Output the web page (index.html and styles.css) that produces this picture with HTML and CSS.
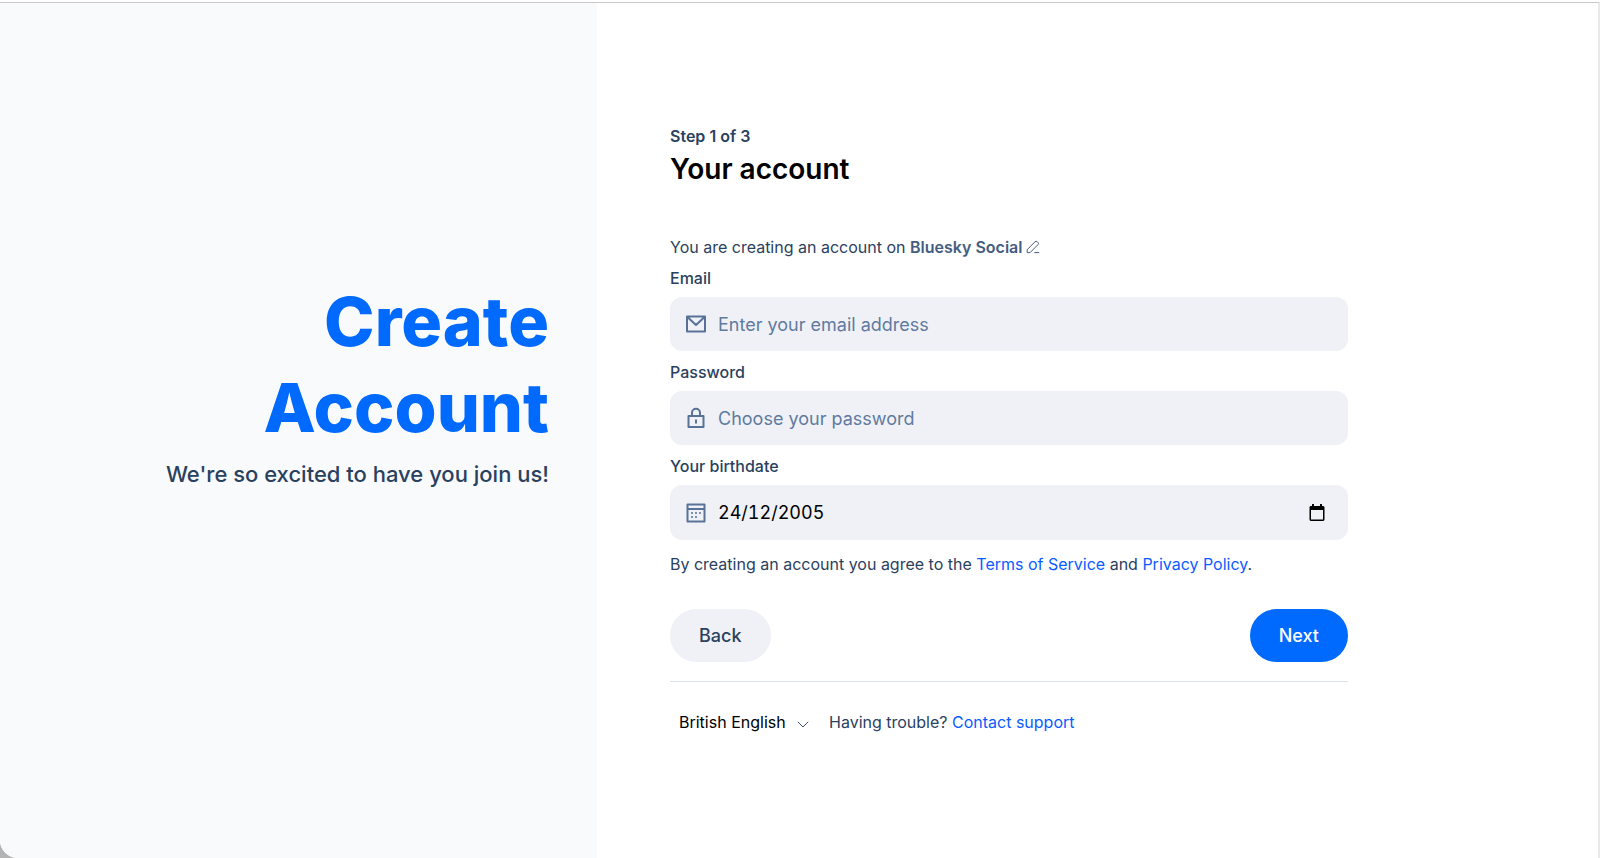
FILE: index.html
```
<!DOCTYPE html>
<html lang="en-GB">
<head>
<meta charset="utf-8">
<meta name="viewport" content="width=device-width, initial-scale=1">
<title>Create Account</title>
<link rel="stylesheet" href="styles.css">
</head>
<body>
<div class="page">
  <aside class="intro">
    <h1 class="intro-title">Create<br>Account</h1>
    <p class="intro-text">We're so excited to have you join us!</p>
  </aside>
  <main class="content">
    <form class="form">
      <p class="step">Step 1 of 3</p>
      <h2 class="title">Your account</h2>
      <p class="host">You are creating an account on
        <button type="button" class="host-button">Bluesky Social
          <svg class="pencil" viewBox="0 0 14 14" aria-hidden="true"><path d="M1.2 12.6v-3L9 1.8a1.6 1.6 0 0 1 2.3 0l.6.6a1.6 1.6 0 0 1 0 2.3l-7.800 7.900zM8.400 12.600h4.800"/></svg></button></p>

      <div class="field">
        <label for="email">Email</label>
        <div class="box">
          <svg class="icon" viewBox="0 0 24 24" aria-hidden="true"><path d="M3 4.500h18v15H3zM3.400 5L12 13l8.600-8"/></svg>
          <input id="email" type="email" placeholder="Enter your email address">
        </div>
      </div>
      <div class="field">
        <label for="password">Password</label>
        <div class="box">
          <svg class="icon" viewBox="0 0 24 24" aria-hidden="true"><path d="M4.500 10h15v11h-15zM8 10V6.700a4 4 0 0 1 8 0V10M12 13.500v4"/></svg>
          <input id="password" type="password" placeholder="Choose your password">
        </div>
      </div>
      <div class="field">
        <label for="birthdate">Your birthdate</label>
        <div class="box box-date">
          <svg class="icon" viewBox="0 0 24 24" aria-hidden="true"><path d="M3.500 3.500h17v17h-17zM3.500 8h17"/><path class="dots" d="M8 12h.01M12 12h.01M16 12h.01M8 16h.01M12 16h.01"/></svg>
          <input id="birthdate" class="date" type="text" inputmode="numeric" value="24/12/2005">
          <button type="button" class="picker" aria-label="Open calendar">
            <svg viewBox="0 0 16 18" aria-hidden="true"><path d="M3 0h2v2h6V0h2v2h1.200A1.400 1.400 0 0 1 15.500 3.400V15.600A1.400 1.400 0 0 1 14.100 17H1.900A1.400 1.400 0 0 1 .5 15.600V3.400A1.400 1.400 0 0 1 1.900 2H3zM2 6v9.500h12V6z"/></svg>
          </button>
        </div>
      </div>

      <p class="terms">By creating an account you agree to the <a href="#terms">Terms of Service</a> and <a href="#privacy">Privacy Policy</a>.</p>
      <div class="actions">
        <button type="button" class="button">Back</button>
        <button type="submit" class="button button-primary">Next</button>
      </div>
      <div class="footer">
        <div class="language">
          <select aria-label="Language"><option>British English</option></select>
          <svg class="chevron" viewBox="0 0 12 7" aria-hidden="true"><path d="M.8.8L6 6 11.200.8"/></svg>
        </div>
        <p>Having trouble? <a href="#support">Contact support</a></p>
      </div>
    </form>
  </main>
</div>
</body>
</html>
```
FILE: styles.css
```
* { box-sizing: border-box; }
body {
  display: flex;
  flex-direction: column;
  min-height: 100vh;
  margin: 0;
  border-top: 2px solid #fff;
  background: #b4b4b4;
  color: #2a415e;
  font: 16px/24px Inter, sans-serif;
}
h1, h2, p { margin: 0; }
button, input, select { font: inherit; color: inherit; border: 0; margin: 0; padding: 0; background: none; }
button { cursor: pointer; }
a { color: #0a5cff; text-decoration: none; }

.page {
  display: flex;
  flex: 1;
  border-top: 1px solid #c8c8ca;
  border-right: 2px solid #e9e9eb;
  border-bottom-left-radius: 18px;
  background: #fff;
  overflow: hidden;
}
.intro {
  flex: 0 0 597px;
  padding: 275px 48px 0 0;
  background: #f9fafc;
  text-align: right;
}
.intro-title {
  color: #006aff;
  font-size: 68px;
  font-weight: 800;
  line-height: 86px;
}
.intro-text {
  margin-top: 8px;
  font-size: 22px;
  font-weight: 500;
  line-height: 32px;
}

.content { flex: 1; padding: 121px 73px 60px; }
.form { max-width: 678px; }
.step { font-weight: 600; }
.title {
  color: #000;
  font-size: 28px;
  font-weight: 600;
  line-height: 42px;
}
.host { margin: 45px 0 8px; }
.host-button { color: #455d80; font-weight: 600; }
.pencil { width: 14px; height: 14px; fill: none; stroke: currentColor; stroke-width: 1; vertical-align: -1px; }

.field { margin-bottom: 10px; }
.field label { display: block; margin-bottom: 7px; font-weight: 500; line-height: 23px; }
.box {
  display: flex;
  align-items: center;
  gap: 10px;
  height: 54px;
  padding: 0 23px 0 14px;
  border-radius: 12px;
  background: #f0f1f6;
}
.box-date { height: 55px; }
.box input { flex: 1; min-width: 0; height: 32px; color: #000; font-size: 18px; outline: 0; }
.box input::placeholder { color: #5f7b9f; opacity: 1; }
.box .date { font-variant-numeric: tabular-nums; }
.icon { flex: none; width: 24px; height: 24px; fill: none; stroke: #587297; stroke-width: 2; stroke-linejoin: round; }
.dots { stroke-linecap: round; }
.picker { display: flex; }
.picker svg { width: 16px; height: 18px; fill: #000; fill-rule: evenodd; }

.terms { margin-top: 12px; }
.actions {
  display: flex;
  justify-content: space-between;
  margin-top: 33px;
  padding-bottom: 19px;
  border-bottom: 1px solid #dce2ea;
}
.button {
  height: 53px;
  padding: 0 29px;
  border-radius: 27px;
  background: #f0f1f6;
  font-size: 18px;
  font-weight: 500;
}
.button-primary { background: #006aff; color: #fff; }

.footer { display: flex; gap: 20px; margin-top: 28px; padding-left: 9px; }
.language { display: flex; align-items: center; gap: 11px; }
.language select { appearance: none; color: #000; }
.chevron { width: 12px; height: 7px; margin-top: 4px; fill: none; stroke: #405168; stroke-width: 1; }
```
